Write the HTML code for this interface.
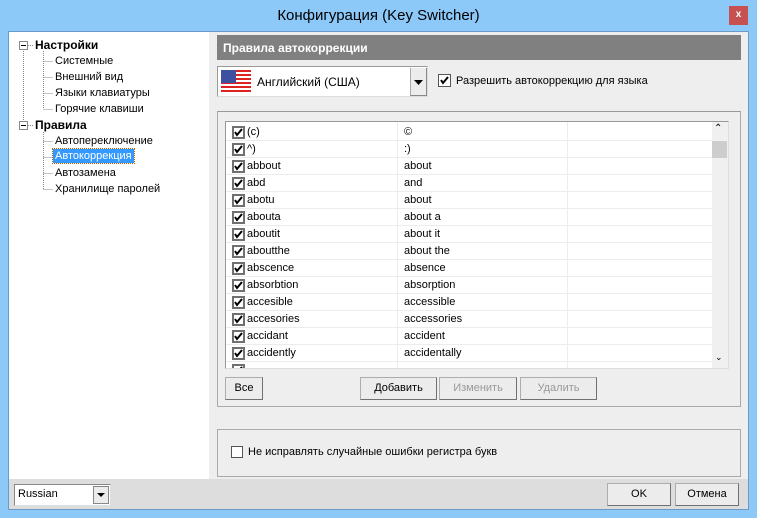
<!DOCTYPE html>
<html><head><meta charset="utf-8"><style>
*{box-sizing:border-box;margin:0;padding:0}
body{width:757px;height:518px;background:#8cc8f8;font-family:"Liberation Sans",sans-serif;font-size:11px;color:#000;position:relative;overflow:hidden}
.a{position:absolute}
.t{font-size:15px;left:0;width:757px;text-align:center;top:7px;color:#000}
.btn{position:absolute;background:#ececec;border:1px solid #adadad;border-right-color:#707070;border-bottom-color:#707070;text-align:center;line-height:21px;font-size:11px}
.cb{position:absolute;width:12px;height:12px;border:2px solid #707070;background:#fff}
.cb svg{position:absolute;left:0;top:0}
.row{position:absolute;left:0;width:486px;height:17px;border-bottom:1px solid #ececec}
.row span{position:absolute;top:2px}
</style></head><body>
<div class="a t">Конфигурация (Key Switcher)</div>
<div class="a" style="left:729px;top:6px;width:19px;height:19px;background:#c75050;color:#fff;font-weight:bold;font-size:10px;text-align:center;line-height:18px">x</div>
<div class="a" style="left:8px;top:31px;width:741px;height:479px;background:#eeeeee;border:1px solid #6a9ac8"></div>
<div class="a" style="left:9px;top:32px;width:200px;height:447px;background:#fff"></div>
<div class="a" style="left:9px;top:479px;width:739px;height:30px;background:#dddddd"></div>
<!-- tree -->
<svg class="a" style="left:9px;top:32px" width="200" height="170">
<g stroke="#888" stroke-dasharray="1 1" fill="none">
<line x1="14.5" y1="17" x2="14.5" y2="94"/>
<line x1="34.5" y1="19" x2="34.5" y2="77"/>
<line x1="34.5" y1="29.5" x2="44" y2="29.5"/><line x1="34.5" y1="45.5" x2="44" y2="45.5"/><line x1="34.5" y1="61.5" x2="44" y2="61.5"/><line x1="34.5" y1="77.5" x2="44" y2="77.5"/>
<line x1="34.5" y1="100" x2="34.5" y2="157"/>
<line x1="34.5" y1="109.5" x2="44" y2="109.5"/><line x1="34.5" y1="125.5" x2="44" y2="125.5"/><line x1="34.5" y1="141.5" x2="44" y2="141.5"/><line x1="34.5" y1="157.5" x2="44" y2="157.5"/>
<line x1="19" y1="13.5" x2="25" y2="13.5"/><line x1="19" y1="93.5" x2="25" y2="93.5"/>
</g>
<rect x="10.5" y="9.5" width="8" height="8" fill="#fff" stroke="#888"/><line x1="12" y1="13.5" x2="17" y2="13.5" stroke="#000"/>
<rect x="10.5" y="89.5" width="8" height="8" fill="#fff" stroke="#888"/><line x1="12" y1="93.5" x2="17" y2="93.5" stroke="#000"/>
</svg>
<div class="a" style="left:35px;top:38px;font-weight:bold;font-size:12px">Настройки</div>
<div class="a" style="left:55px;top:55px">Системные</div>
<div class="a" style="left:55px;top:71px">Внешний вид</div>
<div class="a" style="left:55px;top:87px">Языки клавиатуры</div>
<div class="a" style="left:55px;top:103px">Горячие клавиши</div>
<div class="a" style="left:35px;top:118px;font-weight:bold;font-size:12px">Правила</div>
<div class="a" style="left:55px;top:135px">Автопереключение</div>
<div class="a" style="left:53px;top:149px;background:#3399ff;color:#fff;padding:1px 2px;outline:1px dotted #c06000">Автокоррекция</div>
<div class="a" style="left:55px;top:167px">Автозамена</div>
<div class="a" style="left:55px;top:183px">Хранилище паролей</div>
<!-- header -->
<div class="a" style="left:217px;top:35px;width:524px;height:25px;background:#808080;color:#fff;font-weight:bold;font-size:12px;padding:6px 0 0 6px">Правила автокоррекции</div>
<!-- combo -->
<div class="a" style="left:217px;top:66px;width:211px;height:31px;background:#fff;border:1px solid #999;border-right-color:#ddd;border-bottom-color:#ddd"></div>
<svg class="a" style="left:221px;top:70px" width="30" height="23"><rect width="30" height="23" fill="#fff"/><g fill="#d22"><rect y="0" width="30" height="2"/><rect y="4" width="30" height="2"/><rect y="8" width="30" height="2"/><rect y="12" width="30" height="2"/><rect y="16" width="30" height="2"/><rect y="20" width="30" height="2"/></g><rect width="15" height="13" fill="#4050a0"/></svg>
<div class="a" style="left:257px;top:75px;font-size:12px">Английский (США)</div>
<div class="a" style="left:410px;top:68px;width:17px;height:28px;background:#ececec;border-left:1px solid #aaa;border-bottom:1px solid #888;border-right:1px solid #888"></div>
<svg class="a" style="left:414px;top:80px" width="9" height="5"><path d="M0 0h9L4.5 5z" fill="#000"/></svg>
<div class="cb" style="left:438px;top:74px;width:13px;height:13px;border:1px solid #555"><svg width="11" height="11"><path d="M2 5l2 3 5-6" stroke="#000" stroke-width="2" fill="none"/></svg></div>
<div class="a" style="left:456px;top:75px;font-size:11px">Разрешить автокоррекцию для языка</div>
<!-- group -->
<div class="a" style="left:217px;top:111px;width:524px;height:296px;border:1px solid #aaa;border-top-color:#999"></div>
<div class="a" style="left:225px;top:121px;width:504px;height:248px;background:#fff;border:1px solid #999;border-right-color:#ddd;border-bottom-color:#ddd;overflow:hidden">
<div class="a" style="left:171px;top:0;width:1px;height:248px;background:#ececec"></div>
<div class="a" style="left:341px;top:0;width:1px;height:248px;background:#ececec"></div>
<div class="a" style="left:486px;top:0;width:17px;height:248px;background:#f0f0f0"></div>
<div class="a" style="left:486px;top:19px;width:15px;height:17px;background:#cdcdcd"></div>
<div class="a" style="left:488px;top:1px;font-size:10px">&#8963;</div>
<div class="a" style="left:489px;top:230px;font-size:9px">&#8964;</div>
<div id="rows"></div>
</div>
<script>
var d=[["(c)","©"],["^)",":)"],["abbout","about"],["abd","and"],["abotu","about"],["abouta","about a"],["aboutit","about it"],["aboutthe","about the"],["abscence","absence"],["absorbtion","absorption"],["accesible","accessible"],["accesories","accessories"],["accidant","accident"],["accidently","accidentally"],["",""]];
var h="";d.forEach(function(r,i){h+='<div class="row" style="top:'+(2+i*17)+'px"><div class="cb" style="left:6px;top:2px;width:13px;height:13px"><svg width="9" height="9"><path d="M1 4l2 3 5-6" stroke="#000" stroke-width="2" fill="none"/></svg></div><span style="left:21px">'+r[0]+'</span><span style="left:178px">'+r[1]+'</span></div>'});
document.getElementById("rows").innerHTML=h;
</script>
<div class="btn" style="left:225px;top:377px;width:38px;height:23px">Все</div>
<div class="btn" style="left:360px;top:377px;width:77px;height:23px">Добавить</div>
<div class="btn" style="left:439px;top:377px;width:78px;height:23px;color:#999">Изменить</div>
<div class="btn" style="left:520px;top:377px;width:77px;height:23px;color:#999">Удалить</div>
<div class="a" style="left:217px;top:429px;width:524px;height:48px;border:1px solid #aaa"></div>
<div class="a" style="left:231px;top:446px;width:12px;height:12px;border:1px solid #555;background:#fff"></div>
<div class="a" style="left:248px;top:446px;font-size:11px">Не исправлять случайные ошибки регистра букв</div>
<div class="a" style="left:14px;top:484px;width:97px;height:22px;background:#fff;border:1px solid #888;border-right-color:#ddd;border-bottom-color:#ddd;padding:3px 0 0 3px;font-size:11px">Russian</div>
<div class="a" style="left:93px;top:486px;width:16px;height:18px;background:#ececec;border:1px solid #888"></div>
<svg class="a" style="left:97px;top:493px" width="8" height="4"><path d="M0 0h8L4 4z" fill="#000"/></svg>
<div class="btn" style="left:607px;top:483px;width:64px;height:23px">OK</div>
<div class="btn" style="left:675px;top:483px;width:64px;height:23px">Отмена</div>
</body></html>
